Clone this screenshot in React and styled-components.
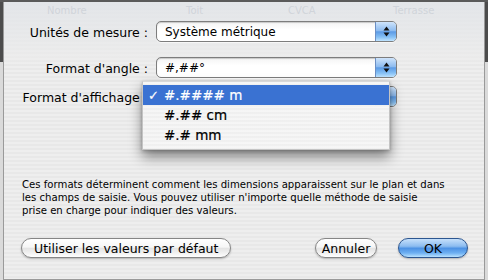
import React from "react";
import styled, { createGlobalStyle } from "styled-components";

const Global = createGlobalStyle`
  html, body { margin: 0; padding: 0; background: #dcdcdc; }
  body { width: 488px; height: 280px; overflow: hidden; }
  * { box-sizing: border-box; }
`;

const FONT = `"DejaVu Sans", "Lucida Grande", "Liberation Sans", sans-serif`;

const Frame = styled.div`
  width: 488px;
  height: 280px;
  position: relative;
  overflow: hidden;
  background: linear-gradient(to bottom, #4c4c4c 0 62px, #dadada 62px);
  padding: 0 3px 2px 3px;
  font-family: ${FONT};
  color: #000;
`;

const Sheet = styled.div`
  position: relative;
  height: 100%;
  border: 1px solid #9a9a9a;
  border-top: none;
  background:
    linear-gradient(to bottom, rgba(225,228,232,0.85) 0px, rgba(236,236,236,0.6) 55px, rgba(236,236,236,0) 64px),
    repeating-linear-gradient(to bottom, #eeeeee 0 2px, #e8e8e8 2px 4px);
  display: flex;
  flex-direction: column;
`;

const TopEdge = styled.div`
  height: 2px;
  background: #5a5a5a;
  margin: 0 -4px;
`;

const Ghost = styled.div`
  height: 18px;
  position: relative;
  font-size: 10px;
  color: rgba(190, 196, 204, 0.55);
`;

const GhostLabel = styled.span`
  position: absolute;
  left: ${(p) => p.$x}px;
  top: 3px;
`;

const Row = styled.div`
  display: grid;
  grid-template-columns: 144px 241px;
  column-gap: 8px;
  align-items: center;
  margin-top: ${(p) => p.$mt || 0}px;
  height: 20px;
`;

const Label = styled.div`
  text-align: right;
  font-size: 12.5px;
  white-space: nowrap;
  padding-top: 1px;
`;

const Popup = styled.div`
  height: 21px;
  display: flex;
  border-radius: 5px;
  border: 1px solid #7d7d7d;
  background: linear-gradient(#f4f4f4, #ffffff 40%, #ffffff);
  box-shadow: inset 0 1px 1px rgba(0,0,0,0.18), 0 1px 0 rgba(255,255,255,0.6);
  overflow: hidden;
`;

const PopupText = styled.div`
  flex: 1;
  font-size: 12px;
  padding-left: 8px;
  display: flex;
  align-items: center;
  white-space: nowrap;
`;

const PopupArrow = styled.div`
  width: 21px;
  border-left: 1px solid #6b8fc4;
  background: linear-gradient(#cfe4fb 0%, #8ebcf0 45%, #5c9be6 52%, #87c1f5 80%, #c0e4ff 100%);
  display: flex;
  align-items: center;
  justify-content: center;
`;

const Menu = styled.div`
  position: absolute;
  left: 138px;
  top: 79px;
  width: 248px;
  padding: 3px 0 4px;
  background: repeating-linear-gradient(to bottom, rgba(246,246,246,0.97) 0 2px, rgba(240,240,240,0.97) 2px 4px);
  border: 1px solid #c4c4c4;
  border-top-color: #d8d8d8;
  box-shadow: 0 7px 12px rgba(0,0,0,0.45), 0 1px 3px rgba(0,0,0,0.25);
  z-index: 5;
`;

const MenuItem = styled.div`
  height: 20px;
  display: flex;
  align-items: center;
  font-size: 13.5px;
  background: ${(p) => (p.$selected ? "#3a72d2" : "transparent")};
  color: ${(p) => (p.$selected ? "#fff" : "#000")};
  white-space: nowrap;
  -webkit-text-stroke: 0.2px currentColor;
`;

const Check = styled.span`
  width: 21px;
  padding-left: 5px;
  font-size: 13px;
`;

const Paragraph = styled.p`
  margin: 72px 0 0 18px;
  font-size: 10.15px;
  line-height: 13px;
  width: 464px;
  white-space: pre-line;
`;

const Buttons = styled.div`
  display: flex;
  align-items: center;
  margin: 21px 0 0 17px;
  padding-right: 16px;
`;

const Spacer = styled.div`
  flex: 1;
`;

const Button = styled.button`
  font-family: ${FONT};
  font-size: 12.5px;
  height: 20px;
  padding: 0 ${(p) => (p.$px != null ? p.$px : 10)}px;
  width: ${(p) => (p.$w ? `${p.$w}px` : "auto")};
  border-radius: 10px;
  border: 1px solid ${(p) => (p.$primary ? "#2c5690" : "#868686")};
  color: #000;
  margin-left: ${(p) => p.$ml || 0}px;
  background: ${(p) =>
    p.$primary
      ? "linear-gradient(#c6e0fb 0%, #8cbcf0 40%, #4d92e4 52%, #6eb0f2 78%, #b9e2ff 100%)"
      : "linear-gradient(#ffffff 0%, #f6f6f6 45%, #e4e4e4 52%, #f2f2f2 80%, #ffffff 100%)"};
  box-shadow: 0 1px 2px rgba(0,0,0,0.25);
  display: flex;
  align-items: center;
  justify-content: center;
`;

const Arrows = () => (
  <svg width="7" height="11" viewBox="0 0 7 11">
    <path d="M3.5 0.5 L6.5 4.5 L0.5 4.5 Z" fill="#111" />
    <path d="M3.5 10.5 L6.5 6.5 L0.5 6.5 Z" fill="#111" />
  </svg>
);

export default function App() {
  return (
    <>
      <Global />
      <Frame>
        <TopEdge />
        <Sheet>
          <Ghost>
            <GhostLabel $x={43}>Nombre</GhostLabel>
            <GhostLabel $x={182}>Toit</GhostLabel>
            <GhostLabel $x={284}>CVCA</GhostLabel>
            <GhostLabel $x={389}>Terrasse</GhostLabel>
          </Ghost>
          <Row $mt={1}>
            <Label>Unités de mesure :</Label>
            <Popup>
              <PopupText>Système métrique</PopupText>
              <PopupArrow><Arrows /></PopupArrow>
            </Popup>
          </Row>
          <Row $mt={16}>
            <Label>Format d'angle :</Label>
            <Popup>
              <PopupText>#,##°</PopupText>
              <PopupArrow><Arrows /></PopupArrow>
            </Popup>
          </Row>
          <Row $mt={9}>
            <Label>Format d'affichage :</Label>
            <Popup>
              <PopupText />
              <PopupArrow><Arrows /></PopupArrow>
            </Popup>
          </Row>
          <Menu>
            <MenuItem $selected><Check>✓</Check>#.#### m</MenuItem>
            <MenuItem><Check />#.## cm</MenuItem>
            <MenuItem><Check />#.# mm</MenuItem>
          </Menu>
          <Paragraph>
            {"Ces formats déterminent comment les dimensions apparaissent sur le plan et dans\nles champs de saisie.  Vous pouvez utiliser n'importe quelle méthode de saisie\nprise en charge pour indiquer des valeurs."}
          </Paragraph>
          <Buttons>
            <Button $px={12}>Utiliser les valeurs par défaut</Button>
            <Spacer />
            <Button $px={0} $w={62}>Annuler</Button>
            <Button $primary $w={70} $ml={21}>OK</Button>
          </Buttons>
        </Sheet>
      </Frame>
    </>
  );
}
